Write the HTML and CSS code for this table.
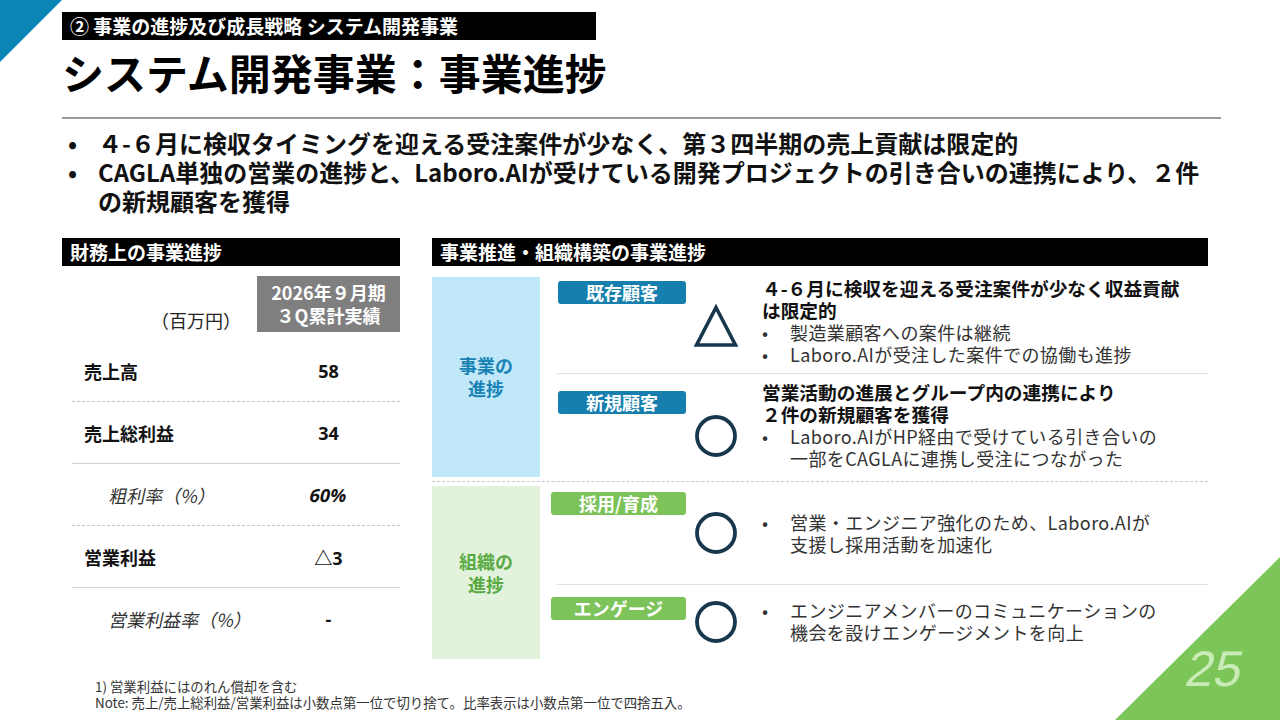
FILE: index.html
```html
<!DOCTYPE html>
<html lang="ja">
<head>
<meta charset="utf-8">
<title>システム開発事業：事業進捗</title>
<link rel="stylesheet" href="styles.css">
</head>
<body>
<div class="slide">
  <svg class="deco-tl" width="62" height="62" viewBox="0 0 62 62"><polygon points="0,0 62,0 0,62" fill="#0b84b6"/></svg>
  <div class="deco-br">
    <svg width="165" height="163" viewBox="0 0 165 163"><polygon points="165,0 165,163 0,163" fill="#7cc659"/></svg>
    <span class="pageno">25</span>
  </div>

  <div class="page">
    <div class="kicker">② 事業の進捗及び成長戦略 システム開発事業</div>
    <h1 class="title">システム開発事業：事業進捗</h1>
    <div class="rule"></div>

    <ul class="summary">
      <li><span class="dot">•</span><span>４-６月に検収タイミングを迎える受注案件が少なく、第３四半期の売上貢献は限定的</span></li>
      <li><span class="dot">•</span><span>CAGLA単独の営業の進捗と、Laboro.AIが受けている開発プロジェクトの引き合いの連携により、２件<br>の新規顧客を獲得</span></li>
    </ul>

    <div class="main">
      <section class="fin">
        <div class="sec-head">財務上の事業進捗</div>
        <div class="fin-head">
          <div class="unit">（百万円）</div>
          <div class="period">2026年９月期<br>３Q累計実績</div>
        </div>
        <div class="row dotted"><span class="lbl">売上高</span><span class="val">58</span></div>
        <div class="row solid"><span class="lbl">売上総利益</span><span class="val">34</span></div>
        <div class="row dotted sub"><span class="lbl"><span class="slant">粗利率（%）</span></span><span class="val"><span class="slant">60%</span></span></div>
        <div class="row solid"><span class="lbl">営業利益</span><span class="val">△3</span></div>
        <div class="row sub plain"><span class="lbl"><span class="slant">営業利益率（%）</span></span><span class="val">-</span></div>
      </section>

      <section class="prog">
        <div class="sec-head">事業推進・組織構築の事業進捗</div>

        <div class="group biz">
          <div class="glabel">事業の<br>進捗</div>
          <div class="items">
            <div class="item i1">
              <div class="badge">既存顧客</div>
              <svg class="icon" width="44" height="44" viewBox="0 0 44 44"><polygon points="22,3.5 41.5,41 2.5,41" fill="none" stroke="#17374d" stroke-width="3.6"/></svg>
              <div class="text">
                <p class="head">４-６月に検収を迎える受注案件が少なく収益貢献<br>は限定的</p>
                <p class="bl"><span class="dot">•</span><span>製造業顧客への案件は継続</span></p>
                <p class="bl"><span class="dot">•</span><span>Laboro.AIが受注した案件での協働も進捗</span></p>
              </div>
            </div>
            <div class="divider"></div>
            <div class="item i2">
              <div class="badge">新規顧客</div>
              <svg class="icon" width="44" height="44" viewBox="0 0 44 44"><circle cx="22" cy="22" r="19" fill="none" stroke="#17374d" stroke-width="3.8"/></svg>
              <div class="text">
                <p class="head">営業活動の進展とグループ内の連携により<br>２件の新規顧客を獲得</p>
                <p class="bl"><span class="dot">•</span><span>Laboro.AIがHP経由で受けている引き合いの<br>一部をCAGLAに連携し受注につながった</span></p>
              </div>
            </div>
          </div>
        </div>

        <div class="gsep"></div>

        <div class="group org">
          <div class="glabel">組織の<br>進捗</div>
          <div class="items">
            <div class="item i3">
              <div class="badge">採用/育成</div>
              <svg class="icon" width="44" height="44" viewBox="0 0 44 44"><circle cx="22" cy="22" r="19" fill="none" stroke="#17374d" stroke-width="3.8"/></svg>
              <div class="text">
                <p class="bl"><span class="dot">•</span><span>営業・エンジニア強化のため、Laboro.AIが<br>支援し採用活動を加速化</span></p>
              </div>
            </div>
            <div class="divider"></div>
            <div class="item i4">
              <div class="badge">エンゲージ</div>
              <svg class="icon" width="44" height="44" viewBox="0 0 44 44"><circle cx="22" cy="22" r="19" fill="none" stroke="#17374d" stroke-width="3.8"/></svg>
              <div class="text">
                <p class="bl"><span class="dot">•</span><span>エンジニアメンバーのコミュニケーションの<br>機会を設けエンゲージメントを向上</span></p>
              </div>
            </div>
          </div>
        </div>
      </section>
    </div>

    <div class="notes">
      <p>1) 営業利益にはのれん償却を含む</p>
      <p>Note: 売上/売上総利益/営業利益は小数点第一位で切り捨て。比率表示は小数点第一位で四捨五入。</p>
    </div>
  </div>
</div>
</body>
</html>
```

FILE: styles.css
```css
* { box-sizing: border-box; }
html, body { margin: 0; padding: 0; background: #fff; }
body {
  font-family: "Noto Sans CJK JP", "Noto Sans", "Liberation Sans", sans-serif;
  color: #111;
}
p { margin: 0; }

.slide {
  position: relative;
  width: 1280px;
  height: 720px;
  overflow: hidden;
  background: #fff;
}

.deco-tl { position: absolute; left: 0; top: 0; display: block; }
.deco-br { position: absolute; right: 0; bottom: 0; width: 165px; height: 163px; }
.deco-br svg { display: block; }
.pageno {
  position: absolute;
  right: 37px;
  bottom: 26px;
  font-family: "Liberation Sans", Arial, sans-serif;
  font-size: 50px;
  line-height: 1;
  color: #c9ecb6;
  transform: skewX(-12deg);
}

.page { padding: 12px 0 0 62px; }

.kicker {
  width: 534px;
  height: 28px;
  background: #000;
  color: #fff;
  font-size: 19px;
  font-weight: 700;
  line-height: 28px;
  padding-left: 8px;
  white-space: nowrap;
}

.title {
  margin: 7px 0 0;
  font-size: 42px;
  line-height: 50px;
  font-weight: 700;
  color: #000;
  white-space: nowrap;
}

.rule {
  margin-top: 20px;
  width: 1159px;
  height: 2px;
  background: #9a9a9a;
}

.summary {
  list-style: none;
  margin: 9px 0 0;
  padding: 0 0 0 6px;
  font-size: 24px;
  line-height: 29px;
  font-weight: 700;
  color: #111;
}
.summary li { display: flex; white-space: nowrap; }
.summary .dot { width: 30px; flex: none; }

.main {
  display: flex;
  gap: 32px;
  margin-top: 23px;
  align-items: flex-start;
}

.sec-head {
  height: 28px;
  background: #000;
  color: #fff;
  font-size: 19px;
  font-weight: 700;
  line-height: 28px;
  padding-left: 8px;
  white-space: nowrap;
}

/* left financial table */
.fin { width: 338px; }
.fin-head {
  display: flex;
  justify-content: flex-end;
  align-items: flex-end;
  margin-top: 10px;
  margin-bottom: 8px;
}
.unit {
  font-size: 18px;
  line-height: 24px;
  color: #222;
  margin-right: 16px;
}
.period {
  width: 143px;
  height: 56px;
  background: #7f7f7f;
  color: #fff;
  font-weight: 700;
  font-size: 18px;
  line-height: 23px;
  text-align: center;
  padding-top: 5px;
}
.row {
  display: flex;
  align-items: center;
  height: 62px;
  margin-left: 10px;
  font-size: 18px;
}
.row.dotted { border-bottom: 1px dashed #c4c4c4; }
.row.solid { border-bottom: 1px solid #d0d0d0; }
.row .lbl { flex: 1; padding-left: 12px; font-weight: 700; }
.row .val { width: 143px; text-align: center; font-weight: 700; font-family: "Open Sans", "Noto Sans CJK JP", sans-serif; }
.row.sub .lbl { font-weight: 400; padding-left: 38px; color: #333; }
.slant { display: inline-block; transform: skewX(-12deg); }

/* right progress panel */
.prog { width: 776px; }
.group { display: flex; margin-top: 11px; }
.group.org { margin-top: 0; }
.glabel {
  width: 108px;
  flex: none;
  display: flex;
  align-items: center;
  justify-content: center;
  text-align: center;
  font-size: 18px;
  font-weight: 700;
  line-height: 23px;
}
.biz .glabel { background: #c0e8f9; color: #1a83b5; }
.org .glabel { background: #e3f2dc; color: #5aaa44; }

.items { flex: 1; }
.divider { height: 1px; background: #e2e2e2; margin-left: 17px; }

.gsep {
  margin: 4px 0 4px;
  border-top: 1px dashed #c8c8c8;
}

.item {
  display: grid;
  grid-template-columns: 146px 76px 1fr;
}
.i1 { height: 96px; }
.i2 { height: 103px; }
.i3 { height: 98px; }
.i4 { height: 74px; }

.badge {
  justify-self: end;
  align-self: start;
  height: 23px;
  border-radius: 3px;
  color: #fff;
  font-size: 18px;
  font-weight: 700;
  line-height: 23px;
  text-align: center;
  white-space: nowrap;
}
.biz .badge { width: 128px; background: #167fae; }
.org .badge { width: 135px; background: #7cc35a; }

.icon { display: block; align-self: start; margin-left: 8px; }

.text {
  align-self: start;
  font-size: 18px;
  line-height: 22px;
  white-space: nowrap;
}
.text .head { font-weight: 700; color: #111; font-size: 18.7px; }
.text .bl { display: flex; color: #333; letter-spacing: 0.4px; }
.text .bl .dot { width: 28px; flex: none; }

.i1 .badge { margin-top: 4px; }
.i1 .icon { margin-top: 27px; }
.i1 .text { margin-top: 0; }

.i2 .badge { margin-top: 17px; }
.i2 .icon { margin-top: 40px; }
.i2 .text { margin-top: 7px; }

.i3 .badge { margin-top: 6px; }
.i3 .icon { margin-top: 25px; }
.i3 .text { margin-top: 25px; }

.i4 .badge { margin-top: 12px; }
.i4 .icon { margin-top: 15px; }
.i4 .text { margin-top: 14px; }

.notes {
  margin-top: 20px;
  margin-left: 33px;
  font-size: 13.4px;
  line-height: 15.5px;
  color: #333;
}
```
